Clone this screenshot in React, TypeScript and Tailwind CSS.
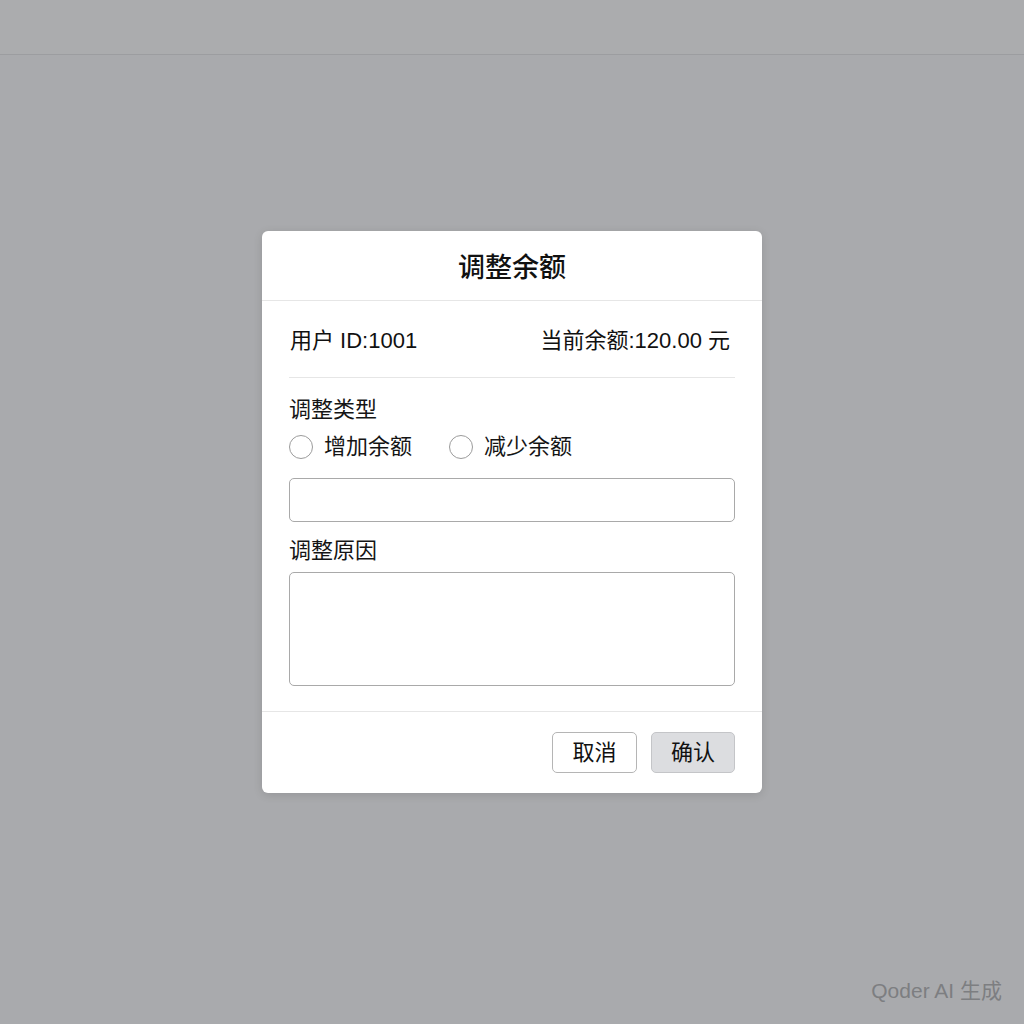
import React from "react";

const font = { fontFamily: '"Liberation Sans", "Noto Sans CJK SC", sans-serif' };

function Radio({ label }: { label: string }) {
  return (
    <label className="flex items-center gap-[11px]">
      <span className="block h-[24px] w-[24px] rounded-full border-[1.5px] border-[#9b9b9b] bg-white" />
      <span className="text-[22px] leading-[24px] text-[#151515]">{label}</span>
    </label>
  );
}

export default function App() {
  return (
    <div className="relative flex h-[1024px] w-[1024px] flex-col bg-[#a9aaad]" style={font}>
      <div className="h-[55px] shrink-0 border-b border-[#9c9da0] bg-[#abacae]" />
      <div className="flex flex-1 justify-center pt-[176px]">
        <div className="h-[562px] w-[500px] overflow-hidden rounded-[6px] bg-white shadow-[0_2px_10px_rgba(0,0,0,0.12)]">
          <div className="flex h-[70px] items-center justify-center border-b border-[#e6e6e6] pt-[5px]">
            <h2 className="text-[27px] font-medium leading-none text-[#111]">调整余额</h2>
          </div>
          <div className="px-[27px] pb-[25px]">
            <div className="flex h-[77px] items-center justify-between border-b border-[#e6e6e6] pl-px pr-[5px] pt-[2px] text-[22px] text-[#111]">
              <span>用户 ID:1001</span>
              <span>当前余额:120.00 元</span>
            </div>
            <div className="mt-[20px] text-[22px] leading-[24px] text-[#151515]">调整类型</div>
            <div className="mt-[13px] flex items-center gap-[37px]">
              <Radio label="增加余额" />
              <Radio label="减少余额" />
            </div>
            <input
              className="mt-[19px] block h-[44px] w-full rounded-[5px] border border-[#a9a9a9] bg-white px-3 outline-none"
              type="text"
            />
            <div className="mt-[17px] text-[22px] leading-[24px] text-[#151515]">调整原因</div>
            <textarea className="mt-[9px] block h-[114px] w-full resize-none rounded-[5px] border border-[#a9a9a9] bg-white px-3 py-2 outline-none" />
          </div>
          <div className="flex justify-end gap-[14px] border-t border-[#e6e6e6] px-[27px] pt-[20px]">
            <button className="h-[41px] w-[85px] rounded-[5px] border border-[#b5b5b5] bg-white text-[22px] text-[#111]">
              取消
            </button>
            <button className="h-[41px] w-[84px] rounded-[5px] border border-[#c4c5c8] bg-[#dcdde0] text-[22px] text-[#111]">
              确认
            </button>
          </div>
        </div>
      </div>
      <div className="absolute bottom-[18px] right-[22px] text-[21px] text-[#7d7e81]">Qoder AI 生成</div>
    </div>
  );
}
